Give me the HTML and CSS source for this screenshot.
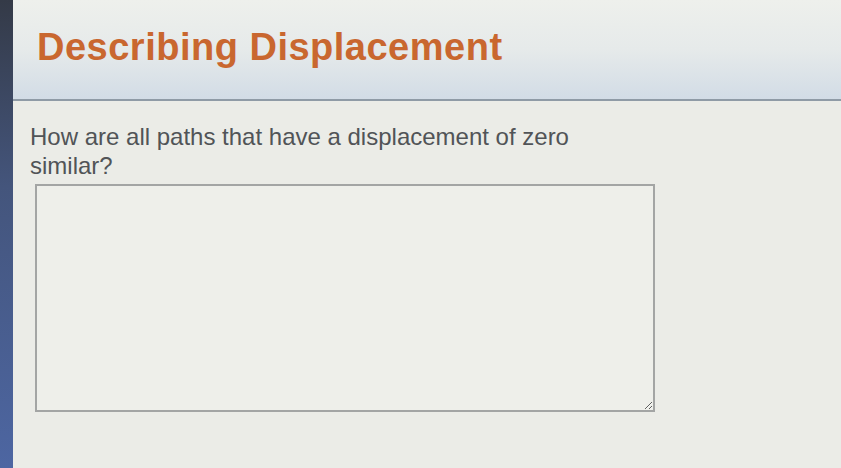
FILE: index.html
```html
<!DOCTYPE html>
<html lang="en">
<head>
    <meta charset="UTF-8">
    <meta name="viewport" content="width=device-width, initial-scale=1.0">
    <title>Describing Displacement</title>
    <link rel="stylesheet" href="styles.css">
</head>
<body>
    <div class="page">
        <div class="side"></div>
        <div class="main">
            <div class="head">
                <h1>Describing Displacement</h1>
            </div>
            <div class="question">
                <p>How are all paths that have a displacement of zero similar?</p>
                <textarea name="answer"></textarea>
            </div>
        </div>
    </div>
</body>
</html>
```

FILE: styles.css
```css
*{
    padding: 0;
    margin: 0;
    box-sizing: border-box;
}
body{
    width: 841px;
    height: 468px;
    overflow: hidden;
    background-color: #ebece7;
    font-family: "Liberation Sans", Arial, sans-serif;
}
.page{
    display: flex;
    height: 100%;
}
.side{
    width: 13px;
    flex: none;
    background: linear-gradient(#343a47, #44557c 40%, #4d66a2);
}
.main{
    flex: 1;
    display: flex;
    flex-direction: column;
}
.head{
    height: 101px;
    padding: 26px 0 0 24px;
    background: linear-gradient(#eef0ec, #e6eaea 50%, #d2dce6);
    border-bottom: 2px solid #8f9ba6;
}
.head h1{
    font-size: 38px;
    font-weight: bold;
    color: #c9672f;
    letter-spacing: 0.5px;
}
.question{
    padding: 21px 0 0 17px;
}
.question p{
    width: 580px;
    font-size: 24px;
    line-height: 29px;
    color: #515457;
}
.question textarea{
    display: block;
    width: 620px;
    height: 228px;
    margin: 4px 0 0 5px;
    background-color: #eeefea;
    border: 2px solid #a3a5a4;
    resize: both;
}
```
